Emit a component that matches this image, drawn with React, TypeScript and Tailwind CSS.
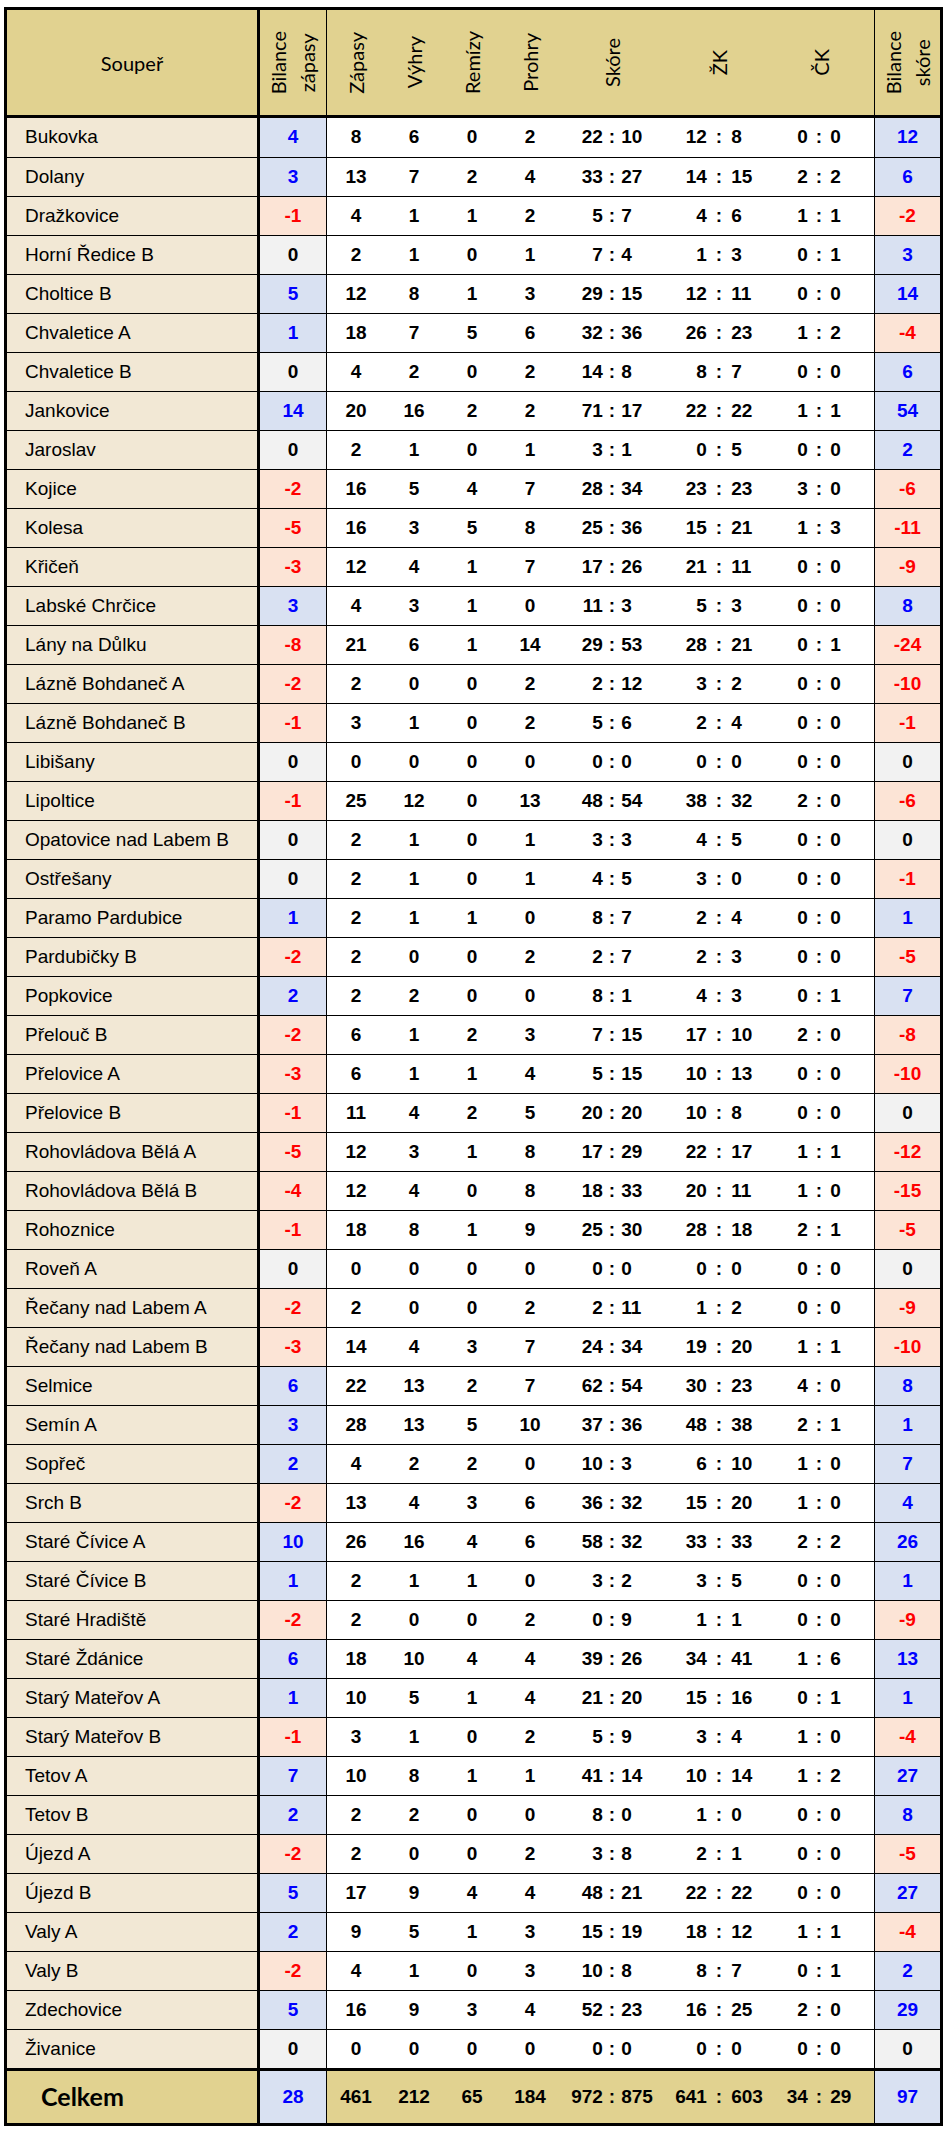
import React from "react";

type Row = [string, number, number, number, number, number, string, string, string, number];

const rows: Row[] = [
  ["Bukovka", 4, 8, 6, 0, 2, "22:10", "12:8", "0:0", 12],
  ["Dolany", 3, 13, 7, 2, 4, "33:27", "14:15", "2:2", 6],
  ["Dražkovice", -1, 4, 1, 1, 2, "5:7", "4:6", "1:1", -2],
  ["Horní Ředice B", 0, 2, 1, 0, 1, "7:4", "1:3", "0:1", 3],
  ["Choltice B", 5, 12, 8, 1, 3, "29:15", "12:11", "0:0", 14],
  ["Chvaletice A", 1, 18, 7, 5, 6, "32:36", "26:23", "1:2", -4],
  ["Chvaletice B", 0, 4, 2, 0, 2, "14:8", "8:7", "0:0", 6],
  ["Jankovice", 14, 20, 16, 2, 2, "71:17", "22:22", "1:1", 54],
  ["Jaroslav", 0, 2, 1, 0, 1, "3:1", "0:5", "0:0", 2],
  ["Kojice", -2, 16, 5, 4, 7, "28:34", "23:23", "3:0", -6],
  ["Kolesa", -5, 16, 3, 5, 8, "25:36", "15:21", "1:3", -11],
  ["Křičeň", -3, 12, 4, 1, 7, "17:26", "21:11", "0:0", -9],
  ["Labské Chrčice", 3, 4, 3, 1, 0, "11:3", "5:3", "0:0", 8],
  ["Lány na Důlku", -8, 21, 6, 1, 14, "29:53", "28:21", "0:1", -24],
  ["Lázně Bohdaneč A", -2, 2, 0, 0, 2, "2:12", "3:2", "0:0", -10],
  ["Lázně Bohdaneč B", -1, 3, 1, 0, 2, "5:6", "2:4", "0:0", -1],
  ["Libišany", 0, 0, 0, 0, 0, "0:0", "0:0", "0:0", 0],
  ["Lipoltice", -1, 25, 12, 0, 13, "48:54", "38:32", "2:0", -6],
  ["Opatovice nad Labem B", 0, 2, 1, 0, 1, "3:3", "4:5", "0:0", 0],
  ["Ostřešany", 0, 2, 1, 0, 1, "4:5", "3:0", "0:0", -1],
  ["Paramo Pardubice", 1, 2, 1, 1, 0, "8:7", "2:4", "0:0", 1],
  ["Pardubičky B", -2, 2, 0, 0, 2, "2:7", "2:3", "0:0", -5],
  ["Popkovice", 2, 2, 2, 0, 0, "8:1", "4:3", "0:1", 7],
  ["Přelouč B", -2, 6, 1, 2, 3, "7:15", "17:10", "2:0", -8],
  ["Přelovice A", -3, 6, 1, 1, 4, "5:15", "10:13", "0:0", -10],
  ["Přelovice B", -1, 11, 4, 2, 5, "20:20", "10:8", "0:0", 0],
  ["Rohovládova Bělá A", -5, 12, 3, 1, 8, "17:29", "22:17", "1:1", -12],
  ["Rohovládova Bělá B", -4, 12, 4, 0, 8, "18:33", "20:11", "1:0", -15],
  ["Rohoznice", -1, 18, 8, 1, 9, "25:30", "28:18", "2:1", -5],
  ["Roveň A", 0, 0, 0, 0, 0, "0:0", "0:0", "0:0", 0],
  ["Řečany nad Labem A", -2, 2, 0, 0, 2, "2:11", "1:2", "0:0", -9],
  ["Řečany nad Labem B", -3, 14, 4, 3, 7, "24:34", "19:20", "1:1", -10],
  ["Selmice", 6, 22, 13, 2, 7, "62:54", "30:23", "4:0", 8],
  ["Semín A", 3, 28, 13, 5, 10, "37:36", "48:38", "2:1", 1],
  ["Sopřeč", 2, 4, 2, 2, 0, "10:3", "6:10", "1:0", 7],
  ["Srch B", -2, 13, 4, 3, 6, "36:32", "15:20", "1:0", 4],
  ["Staré Čívice A", 10, 26, 16, 4, 6, "58:32", "33:33", "2:2", 26],
  ["Staré Čívice B", 1, 2, 1, 1, 0, "3:2", "3:5", "0:0", 1],
  ["Staré Hradiště", -2, 2, 0, 0, 2, "0:9", "1:1", "0:0", -9],
  ["Staré Ždánice", 6, 18, 10, 4, 4, "39:26", "34:41", "1:6", 13],
  ["Starý Mateřov A", 1, 10, 5, 1, 4, "21:20", "15:16", "0:1", 1],
  ["Starý Mateřov B", -1, 3, 1, 0, 2, "5:9", "3:4", "1:0", -4],
  ["Tetov A", 7, 10, 8, 1, 1, "41:14", "10:14", "1:2", 27],
  ["Tetov B", 2, 2, 2, 0, 0, "8:0", "1:0", "0:0", 8],
  ["Újezd A", -2, 2, 0, 0, 2, "3:8", "2:1", "0:0", -5],
  ["Újezd B", 5, 17, 9, 4, 4, "48:21", "22:22", "0:0", 27],
  ["Valy A", 2, 9, 5, 1, 3, "15:19", "18:12", "1:1", -4],
  ["Valy B", -2, 4, 1, 0, 3, "10:8", "8:7", "0:1", 2],
  ["Zdechovice", 5, 16, 9, 3, 4, "52:23", "16:25", "2:0", 29],
  ["Živanice", 0, 0, 0, 0, 0, "0:0", "0:0", "0:0", 0],
];

// balance cells: blue for plus, red for minus, grey for zero
function tone(v: number) {
  if (v > 0) return "bg-[#d9e1f2] text-[#0000ff]";
  if (v < 0) return "bg-[#fce4d6] text-[#ff0000]";
  return "bg-[#f2f2f2] text-black";
}

function Score({ value, gap }: { value: string; gap: string }) {
  const [a, b] = value.split(":");
  return (
    <div className="grid w-full grid-cols-[1fr_auto_1fr]">
      <span className="text-right">{a}</span>
      <span className={gap}>:</span>
      <span className="text-left">{b}</span>
    </div>
  );
}

function Vertical({ children }: { children: React.ReactNode }) {
  return (
    <div className="flex items-center justify-center">
      <span className="rotate-180 text-center leading-[29px] [writing-mode:vertical-rl]">{children}</span>
    </div>
  );
}

const num = "flex items-center justify-center";

export default function App() {
  return (
    <div className="min-h-screen bg-white pt-[7px] pl-[4px]">
      <div className="w-[939px] border-[3px] border-black font-['Liberation_Sans',Arial,sans-serif] text-[19px] text-black">
        {/* header */}
        <div className="flex h-[108px] border-b-[3px] border-black bg-[#e1d290] font-['Lato',sans-serif] text-[20px]">
          <div className="flex w-[253px] items-center justify-center border-r-[3px] border-black">Soupeř</div>
          <div className="flex w-[67px] justify-center border-r border-black">
            <Vertical>
              Bilance
              <br />
              zápasy
            </Vertical>
          </div>
          <div className="flex w-[58px] justify-center"><Vertical>Zápasy</Vertical></div>
          <div className="flex w-[58px] justify-center"><Vertical>Výhry</Vertical></div>
          <div className="flex w-[58px] justify-center"><Vertical>Remízy</Vertical></div>
          <div className="flex w-[58px] justify-center"><Vertical>Prohry</Vertical></div>
          <div className="flex w-[106px] justify-center"><Vertical>Skóre</Vertical></div>
          <div className="flex w-[108px] justify-center"><Vertical>ŽK</Vertical></div>
          <div className="flex w-[101px] justify-center pr-[5px]"><Vertical>ČK</Vertical></div>
          <div className="flex w-[66px] justify-center border-l border-black">
            <Vertical>
              Bilance
              <br />
              skóre
            </Vertical>
          </div>
        </div>

        {rows.map(([name, bz, z, v, r, p, sk, zk, ck, bs], i) => (
          <div key={name} className={`flex h-[39px] ${i > 0 ? "border-t border-black" : ""}`}>
            <div className="flex w-[253px] items-center border-r-[3px] border-black bg-[#f2e8d5] pl-[18px]">{name}</div>
            <div className={`${num} w-[67px] border-r border-black font-bold ${tone(bz)}`}>{bz}</div>
            <div className="flex bg-white font-bold">
              <div className={`${num} w-[58px]`}>{z}</div>
              <div className={`${num} w-[58px]`}>{v}</div>
              <div className={`${num} w-[58px]`}>{r}</div>
              <div className={`${num} w-[58px]`}>{p}</div>
              <div className={`${num} w-[106px]`}><Score value={sk} gap="mx-[6px]" /></div>
              <div className={`${num} w-[108px]`}><Score value={zk} gap="mx-[9px]" /></div>
              <div className={`${num} w-[101px] pr-[9px]`}><Score value={ck} gap="mx-[8px]" /></div>
            </div>
            <div className={`${num} w-[66px] border-l border-black font-bold ${tone(bs)}`}>{bs}</div>
          </div>
        ))}

        {/* totals */}
        <div className="flex h-[55px] border-t-[3px] border-black bg-[#e1d290] font-bold">
          <div className="flex w-[253px] items-center border-r-[3px] border-black pl-[34px] font-['Lato',sans-serif] text-[25px]">Celkem</div>
          <div className={`${num} w-[67px] border-r border-black bg-[#d9e1f2] text-[#0000ff]`}>28</div>
          <div className={`${num} w-[58px]`}>461</div>
          <div className={`${num} w-[58px]`}>212</div>
          <div className={`${num} w-[58px]`}>65</div>
          <div className={`${num} w-[58px]`}>184</div>
          <div className={`${num} w-[106px]`}><Score value="972:875" gap="mx-[6px]" /></div>
          <div className={`${num} w-[108px]`}><Score value="641:603" gap="mx-[9px]" /></div>
          <div className={`${num} w-[101px] pr-[9px]`}><Score value="34:29" gap="mx-[8px]" /></div>
          <div className={`${num} w-[66px] border-l border-black bg-[#d9e1f2] text-[#0000ff]`}>97</div>
        </div>
      </div>
    </div>
  );
}
